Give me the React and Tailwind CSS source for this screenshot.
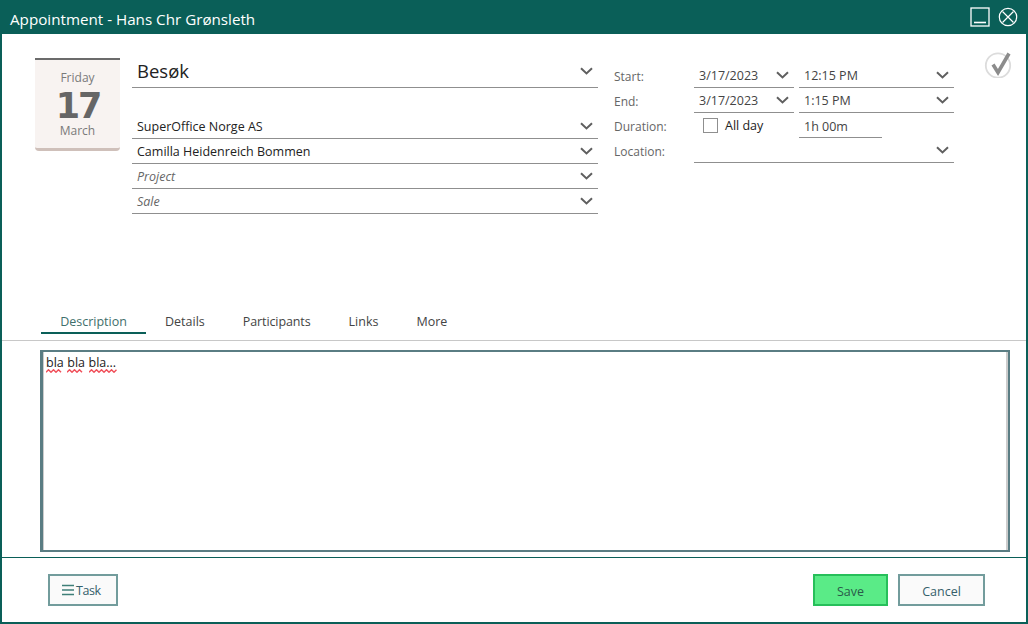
function Chevron() {
  return (
    <svg width="13" height="8" viewBox="0 0 13 8" className="shrink-0">
      <path d="M1 1.2 L6.5 6.4 L12 1.2" fill="none" stroke="#5f5f5f" strokeWidth="2" />
    </svg>
  );
}

function Field({ text, italic }) {
  return (
    <div className="h-[25px] flex items-center justify-between px-[5px] border-b border-[#8f8f8f]">
      <span className={italic ? "pt-[3px] italic text-[12.5px] text-[#666666]" : "pt-[3px] text-[12.5px] text-[#222222]"}>{text}</span>
      <Chevron />
    </div>
  );
}

function PickerField({ text, className }) {
  return (
    <div className={`h-[25px] flex items-center justify-between px-[5px] border-b border-[#8f8f8f] text-[12.5px] text-[#444444] ${className}`}>
      <span className="pt-[3px]">{text}</span>
      <Chevron />
    </div>
  );
}

function Label({ children }) {
  return <div className="h-[25px] w-[80px] pt-[3px] flex items-center text-[12px] text-[#666666]">{children}</div>;
}

// red spell check line under a word
function Squiggle({ children, width }) {
  const points = [];
  for (let x = 0; x <= width; x += 2.5) {
    points.push(`${x},${Math.round(x / 2.5) % 2 === 0 ? 3.2 : 0.8}`);
  }
  return (
    <span className="relative">
      {children}
      <svg width={width} height="4" className="absolute left-0 top-[15px]">
        <polyline points={points.join(" ")} fill="none" stroke="#f0505a" strokeWidth="1.5" />
      </svg>
    </span>
  );
}

export default function App() {
  return (
    <div
      className="w-[1028px] h-[624px] flex flex-col bg-white border-x-2 border-b-2 border-[#0a5f58] overflow-hidden"
      style={{ fontFamily: '"Open Sans", "Noto Sans", sans-serif' }}
    >
      {/* Title bar */}
      <div className="h-[34px] -mx-[2px] shrink-0 bg-[#0a5f58] flex items-center justify-between pl-[10px] pr-[10px] text-white">
        <span className="text-[15.2px] pt-[5px]">Appointment - Hans Chr Grønsleth</span>
        <div className="flex items-center gap-[8px]">
          <svg width="20" height="20" viewBox="0 0 20 20">
            <rect x="1" y="1" width="18" height="18" fill="none" stroke="#fff" strokeWidth="1.3" />
            <path d="M4 15.5 H16" stroke="#fff" strokeWidth="1.6" />
          </svg>
          <svg width="20" height="20" viewBox="0 0 20 20">
            <circle cx="10" cy="10" r="8.7" fill="none" stroke="#fff" strokeWidth="1.2" />
            <path d="M4.5 4.5 L15.5 15.5 M15.5 4.5 L4.5 15.5" stroke="#fff" strokeWidth="1.2" />
          </svg>
        </div>
      </div>

      {/* Top form */}
      <div className="h-[272px] shrink-0 flex pl-[33px] pt-[24px]">
        <div className="w-[85px] h-[93px] shrink-0 flex flex-col items-center bg-[#f8f3f1] border-t-2 border-[#6b6b6b] border-b-[3px] border-b-[#cfc0ba] rounded-b-[4px] pt-[10px]">
          <div className="text-[12px] leading-[16px] text-[#7a7a7a]">Friday</div>
          <div
            className="text-[35px] leading-[34px] mt-[3px] pl-[1px] tracking-[-2px] font-bold text-[#666666]"
            style={{ fontFamily: '"DejaVu Sans", sans-serif' }}
          >
            17
          </div>
          <div className="text-[12px] leading-[16px] text-[#7a7a7a]">March</div>
        </div>

        <div className="w-[466px] ml-[12px] shrink-0">
          <div className="h-[30px] flex items-center justify-between pl-[5px] pr-[5px] pb-[3px] border-b border-[#8f8f8f]">
            <span className="text-[18.5px] text-[#222222]">Besøk</span>
            <Chevron />
          </div>
          <div className="h-[26px]" />
          <Field text="SuperOffice Norge AS" />
          <Field text="Camilla Heidenreich Bommen" />
          <Field text="Project" italic />
          <Field text="Sale" italic />
        </div>

        <div className="w-[340px] ml-[16px] shrink-0 pt-[5px]">
          <div className="flex">
            <Label>Start:</Label>
            <PickerField text="3/17/2023" className="w-[100px]" />
            <PickerField text="12:15 PM" className="w-[155px] ml-[5px]" />
          </div>
          <div className="flex">
            <Label>End:</Label>
            <PickerField text="3/17/2023" className="w-[100px]" />
            <PickerField text="1:15 PM" className="w-[155px] ml-[5px]" />
          </div>
          <div className="flex">
            <Label>Duration:</Label>
            <div className="w-[100px] h-[25px] flex items-center pl-[9px] pb-[1px] gap-[7px] text-[12.5px] text-[#222222]">
              <div className="w-[15px] h-[15px] border border-[#8f8f8f] bg-white" />
              <span className="pt-[2px]">All day</span>
            </div>
            <div className="w-[83px] ml-[5px] h-[25px] flex items-center pl-[5px] pt-[4px] border-b border-[#8f8f8f] text-[12.5px] text-[#444444]">
              1h 00m
            </div>
          </div>
          <div className="flex">
            <Label>Location:</Label>
            <div className="w-[260px] h-[25px] flex items-center justify-end pr-[5px] border-b border-[#8f8f8f]">
              <Chevron />
            </div>
          </div>
        </div>

        <div className="ml-[30px] mt-[-8px] shrink-0">
          <svg width="28" height="28" viewBox="0 0 28 28">
            <circle cx="14" cy="15.5" r="12.2" fill="none" stroke="#dcdcdc" strokeWidth="1.8" />
            <path d="M9 14.5 L14 22.5 L25 3.5" fill="none" stroke="#8c8c8c" strokeWidth="3.6" />
          </svg>
        </div>
      </div>

      {/* Tabs */}
      <div className="h-[35px] shrink-0 flex items-end pl-[39px] border-b border-[#c8c8c8] pb-[6px] text-[12.5px]">
        <div className="w-[105px] h-[23px] pt-[2px] text-center text-[#3f6f6b] border-b-2 border-[#0a5f58]">Description</div>
        <div className="ml-[19px] h-[23px] pt-[2px] text-[#444444]">Details</div>
        <div className="ml-[38px] h-[23px] pt-[2px] tracking-[-0.1px] text-[#444444]">Participants</div>
        <div className="ml-[38px] h-[23px] pt-[2px] text-[#444444]">Links</div>
        <div className="ml-[38px] h-[23px] pt-[2px] text-[#444444]">More</div>
      </div>

      {/* Description */}
      <div className="h-[217px] shrink-0 pt-[9px] pl-[38px] pr-[16px] pb-[5px] border-b border-[#0a5f58]">
        <div className="h-full border-2 border-l-[3px] border-[#5a7d83] pl-[3px] pt-[2px] shadow-[inset_1px_0_0_#cccccc,inset_-2px_0_0_#cccccc]">
          <div className="text-[12.5px] leading-[18px] flex gap-[3.5px] text-[#222222]">
            <Squiggle width={17}>bla</Squiggle>
            <Squiggle width={17}>bla</Squiggle>
            <Squiggle width={28}>bla...</Squiggle>
          </div>
        </div>
      </div>

      {/* Footer */}
      <div className="flex-1 flex items-center justify-between pl-[46px] pr-[41px] pb-[1px] text-[12.5px]">
        <button className="w-[70px] h-[32px] flex items-center pl-[12px] gap-[2px] bg-[#fafafa] border-2 border-[#729c9c] text-[#35606a]">
          <svg width="12" height="12" viewBox="0 0 12 12">
            <path d="M0 1.5 H12 M0 6 H12 M0 10.5 H12" stroke="#3f7f78" strokeWidth="1.5" />
          </svg>
          <span className="pt-[4px] tracking-[-0.4px]">Task</span>
        </button>
        <div className="flex gap-[10px]">
          <button className="w-[75px] h-[32px] pt-[5px] bg-[#5aeb87] border-2 border-[#27bf5a] text-[#2a5a4a]">Save</button>
          <button className="w-[87px] h-[32px] pt-[5px] bg-[#fafafa] border-2 border-[#729c9c] text-[#35606a]">Cancel</button>
        </div>
      </div>
    </div>
  );
}
